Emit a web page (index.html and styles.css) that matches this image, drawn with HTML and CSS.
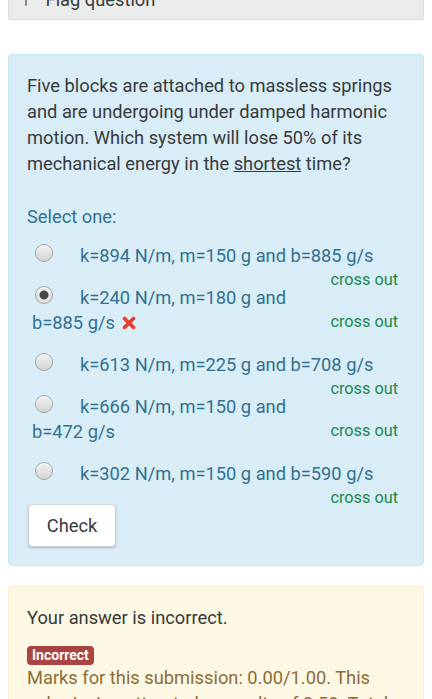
FILE: index.html
```html
<!DOCTYPE html>
<html>
<head>
<meta charset="utf-8">
<title>Question 3</title>
<link rel="stylesheet" href="styles.css">
</head>
<body>
<div class="flagbox">
  <svg class="flagicon" width="12" height="10" viewBox="0 0 12 10"><path d="M3 -6 L3 9" stroke="#8a8a8a" stroke-width="2" stroke-linecap="round"/><path d="M3 -6 L10 -3 L3 1 Z" fill="#9a9a9a"/></svg>
  <span>Flag question</span>
</div>

<div class="que">
  <div class="qtext">Five blocks are attached to massless springs and are undergoing under damped harmonic motion. Which system will lose 50% of its mechanical energy in the <u>shortest</u> time?</div>
  <div class="prompt">Select one:</div>
  <div class="answer">
    <div class="opt"><span class="radio"></span><span class="lbl">k=894 N/m, m=150 g and b=885 g/s</span><span class="crossout">cross out</span></div>
    <div class="opt"><span class="radio on"></span><span class="lbl">k=240 N/m, m=180 g and b=885&nbsp;g/s<svg class="wrong" width="14" height="14" viewBox="0 0 14 14"><path d="M2.5 2.5 L11.5 11.5 M11.5 2.5 L2.5 11.5" stroke="#ee3a2e" stroke-width="3.6" stroke-linecap="round"/></svg></span><span class="crossout">cross out</span></div>
    <div class="opt"><span class="radio"></span><span class="lbl">k=613 N/m, m=225 g and b=708 g/s</span><span class="crossout">cross out</span></div>
    <div class="opt"><span class="radio"></span><span class="lbl">k=666 N/m, m=150 g and b=472 g/s</span><span class="crossout">cross out</span></div>
    <div class="opt"><span class="radio"></span><span class="lbl">k=302 N/m, m=150 g and b=590 g/s</span><span class="crossout">cross out</span></div>
  </div>
  <button class="check">Check</button>
</div>

<div class="outcome">
  <div class="feedback">Your answer is incorrect.</div>
  <div class="badge">Incorrect</div>
  <div class="marks">Marks for this submission: 0.00/1.00. This submission attracted a penalty of 0.50. Total penalties so far: 0.50.</div>
</div>
</body>
</html>
```

FILE: styles.css
```css
html { overflow: hidden; }
body { margin: 0; padding: 0 8px; background: #fff; font-family: Roboto, "Liberation Sans", sans-serif; font-size: 18.3px; line-height: 26px; color: #373a3c; }

.flagbox { margin-top: -13px; padding: 0 14px 6px; background: #eaecec; border: 1px solid #dcdfdf; border-top: none; border-radius: 0 0 3px 3px; color: #373a3c; }
.flagicon { vertical-align: baseline; margin-right: 6px; }

.que { margin-top: 34px; padding: 18px 18px 18px; background: #d9edf7; border: 1px solid #c4e6f1; border-radius: 4px; }
.qtext { color: #373a3c; }
.prompt { margin-top: 27px; color: #31708f; }
.answer { margin-top: 5px; padding: 0 7px 0 5px; color: #31708f; line-height: 25px; }
.opt { padding: 8px 0 9px; }
.radio { display: inline-block; width: 16px; height: 16px; margin: 0 27px 0 3px; border: 1px solid #a3a3a3; border-radius: 50%; background: linear-gradient(#f2f2f2, #d4d4d4); box-shadow: inset 0 1px 1px #fff; }
.radio.on { background: radial-gradient(circle, #474747 0, #474747 4px, #ebebeb 5px, #d2d2d2 100%); }
.wrong { margin-left: 7px; vertical-align: -1px; }
.crossout { float: right; font-size: 16.3px; line-height: 24px; color: #1f8650; }

.check { display: block; margin: 9px 0 0 1px; width: 88px; height: 43px; padding: 0; background: #fff; border: 1px solid #cfd4d6; border-radius: 4px; box-shadow: 0 1px 2px rgba(0,0,0,0.25); font-family: Roboto, "Liberation Sans", sans-serif; font-size: 18.3px; color: #373a3c; }

.outcome { margin-top: 20px; padding: 18px 18px 18px; background: #fcf8e3; border: 1px solid #f8efd2; border-radius: 4px; }
.feedback { color: #373a3c; }
.badge { display: table; margin-top: 15px; padding: 0 5px; height: 19px; line-height: 19px; background: #a94442; color: #fff; font-size: 14px; font-weight: bold; border-radius: 4px; }
.marks { color: #8a6d3b; }
```
